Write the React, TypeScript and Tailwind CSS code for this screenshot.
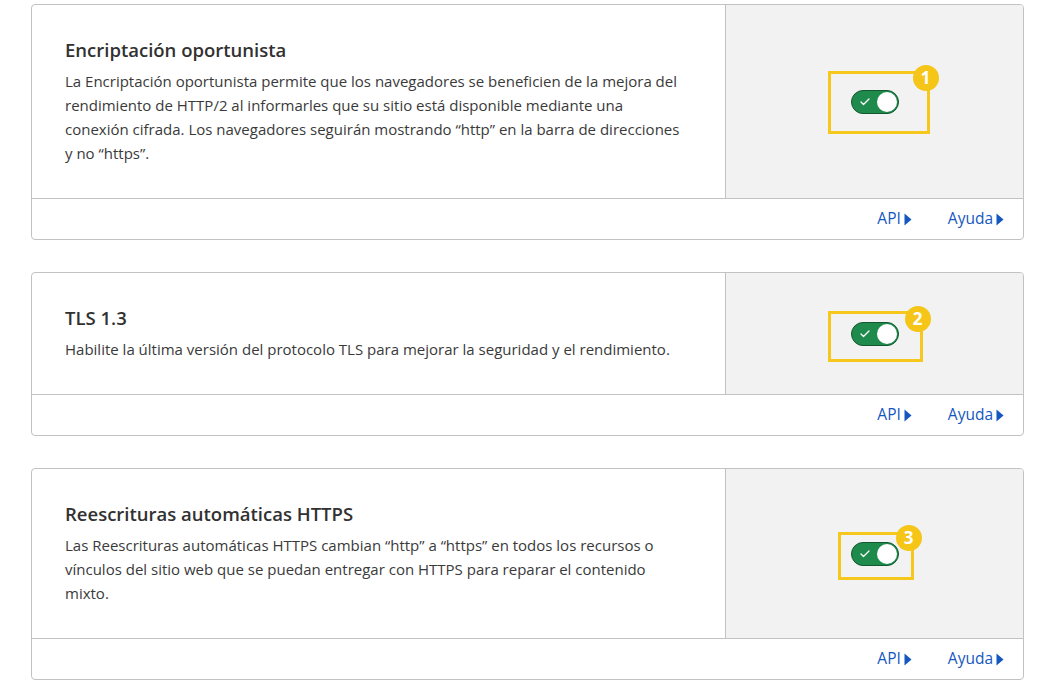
import { Check } from "lucide-react"

interface Setting {
  title: string
  body: string
  badge: string
  boxClass: string
  badgeClass: string
}

const settings: Setting[] = [
  {
    title: "Encriptación oportunista",
    body: "La Encriptación oportunista permite que los navegadores se beneficien de la mejora del rendimiento de HTTP/2 al informarles que su sitio está disponible mediante una conexión cifrada. Los navegadores seguirán mostrando “http” en la barra de direcciones y no “https”.",
    badge: "1",
    boxClass: "-left-[23px] -top-[19px] -right-[31px] -bottom-[20px]",
    badgeClass: "-right-[40px] -top-[25px]",
  },
  {
    title: "TLS 1.3",
    body: "Habilite la última versión del protocolo TLS para mejorar la seguridad y el rendimiento.",
    badge: "2",
    boxClass: "-left-[23px] -top-[11px] -right-[24px] -bottom-[16px]",
    badgeClass: "-right-[32px] -top-[16px]",
  },
  {
    title: "Reescrituras automáticas HTTPS",
    body: "Las Reescrituras automáticas HTTPS cambian “http” a “https” en todos los recursos o vínculos del sitio web que se puedan entregar con HTTPS para reparar el contenido mixto.",
    badge: "3",
    boxClass: "-left-[13px] -top-[10px] -right-[15px] -bottom-[14px]",
    badgeClass: "-right-[23px] -top-[17px]",
  },
]

function Caret() {
  return (
    <svg width="8" height="13" viewBox="0 0 8 13" className="ml-[3px]">
      <path d="M0.5 0.5 L7.5 6.5 L0.5 12.5 Z" fill="currentColor" />
    </svg>
  )
}

function Toggle({ s }: { s: Setting }) {
  return (
    <div className="relative">
      <div className="w-12 h-6 rounded-full bg-[#1e8a4c] border border-[#12592f] flex items-center justify-between pl-[7px] pr-[1px]">
        <Check size={12} strokeWidth={2.5} className="text-white" />
        <div className="w-[20px] h-[20px] rounded-full bg-white" />
      </div>
      {/* annotation overlay */}
      <div className={`absolute border-[3px] border-[#f6c71c] ${s.boxClass}`} />
      <div
        className={`absolute w-[26px] h-[26px] rounded-full bg-[#f5c518] text-white text-[17px] font-bold flex items-center justify-center leading-none ${s.badgeClass}`}
      >
        {s.badge}
      </div>
    </div>
  )
}

function SettingCard({ s }: { s: Setting }) {
  return (
    <div className="border border-[#c2c2c2] rounded-[4px] overflow-hidden">
      <div className="flex">
        <div className="flex-1 pl-[33px] pr-[39px] pt-[32px] pb-[33px]">
          <h3 className="text-[18.5px] leading-[26px] font-semibold text-[#313131]">{s.title}</h3>
          <p className="mt-[6px] text-[15px] leading-[24px] text-[#3a3a3a]">{s.body}</p>
        </div>
        <div className="w-[298px] bg-[#f2f2f2] border-l border-[#c2c2c2] flex items-center justify-center">
          <Toggle s={s} />
        </div>
      </div>
      <div className="border-t border-[#c2c2c2] h-[41px] flex items-center justify-end pr-[19px] gap-[36px] text-[15.5px] text-[#1557c0]">
        <a className="flex items-center">
          API
          <Caret />
        </a>
        <a className="flex items-center">
          Ayuda
          <Caret />
        </a>
      </div>
    </div>
  )
}

export default function App() {
  return (
    <main
      className="min-h-screen bg-white pl-[31px] pr-[13px] pt-[4px]"
      style={{ fontFamily: '"Open Sans", "Noto Sans", sans-serif' }}
    >
      <div className="flex flex-col gap-[32px]">
        {settings.map((s) => (
          <SettingCard key={s.badge} s={s} />
        ))}
      </div>
    </main>
  )
}
